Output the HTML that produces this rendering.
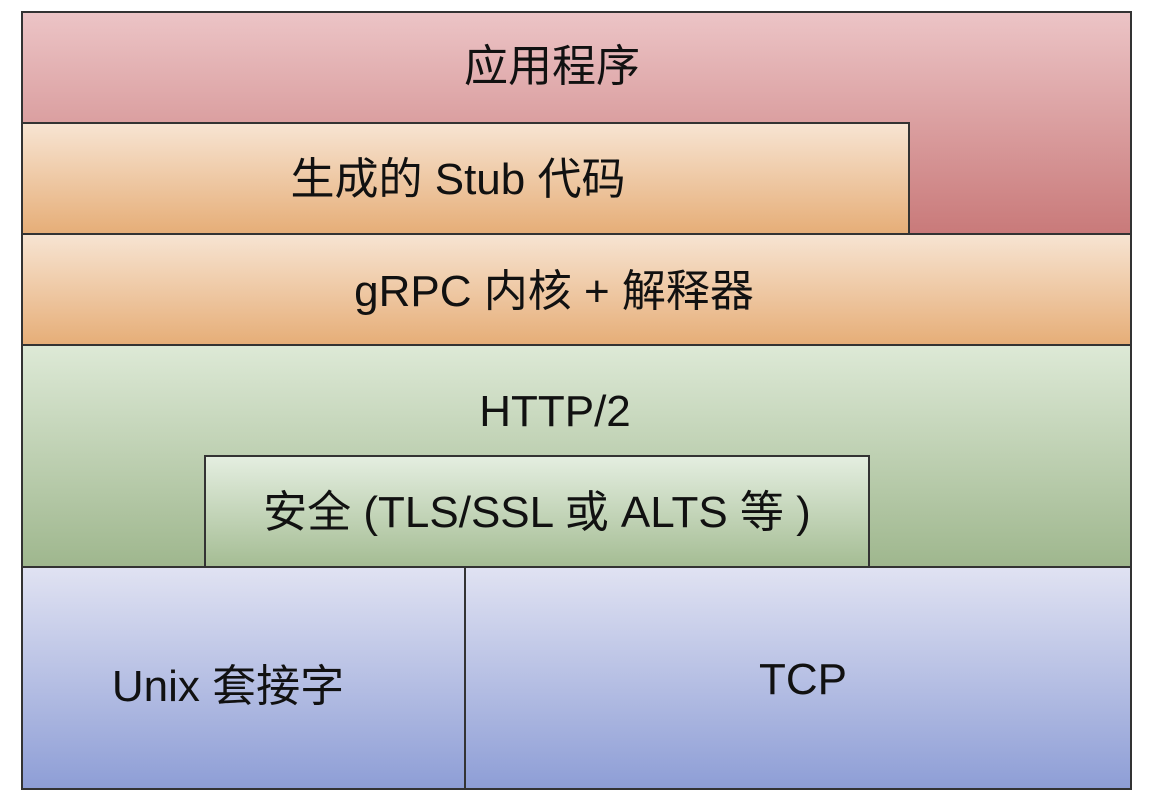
<!DOCTYPE html>
<html><head><meta charset="utf-8"><style>
body{margin:0;width:1150px;height:806px;background:#fff;position:relative;overflow:hidden;font-family:"Liberation Sans","Noto Sans CJK SC",sans-serif;font-size:44px;color:#111}
.b{position:absolute;box-sizing:border-box;border:2px solid #333}
.t{position:absolute;width:1000px;margin-left:-500px;text-align:center;height:60px;line-height:60px;margin-top:-30px;white-space:nowrap}
</style></head><body>
<div class="b" style="left:21px;top:11px;width:1111px;height:224px;background:linear-gradient(#ecc4c6,#c97a7a)"></div>
<div class="b" style="left:21px;top:122px;width:889px;height:113px;background:linear-gradient(#f7e4d2,#e6ae78)"></div>
<div class="b" style="left:21px;top:233px;width:1111px;height:113px;background:linear-gradient(#f7e4d2,#e6ae78)"></div>
<div class="b" style="left:21px;top:344px;width:1111px;height:224px;background:linear-gradient(#dde9d6,#9fb78e)"></div>
<div class="b" style="left:204px;top:455px;width:666px;height:113px;background:linear-gradient(#e4eee0,#a5bd94)"></div>
<div class="b" style="left:21px;top:566px;width:445px;height:224px;background:linear-gradient(#e0e2f2,#8e9ed6)"></div>
<div class="b" style="left:464px;top:566px;width:668px;height:224px;background:linear-gradient(#e0e2f2,#8e9ed6)"></div>
<div class="t" style="left:552px;top:67px">应用程序</div>
<div class="t" style="left:458px;top:180px">生成的 Stub 代码</div>
<div class="t" style="left:554px;top:292px">gRPC 内核 + 解释器</div>
<div class="t" style="left:555px;top:412px">HTTP/2</div>
<div class="t" style="left:537px;top:513px">安全 (TLS/SSL 或 ALTS 等 )</div>
<div class="t" style="left:228px;top:687px">Unix 套接字</div>
<div class="t" style="left:803px;top:680px">TCP</div>
</body></html>
